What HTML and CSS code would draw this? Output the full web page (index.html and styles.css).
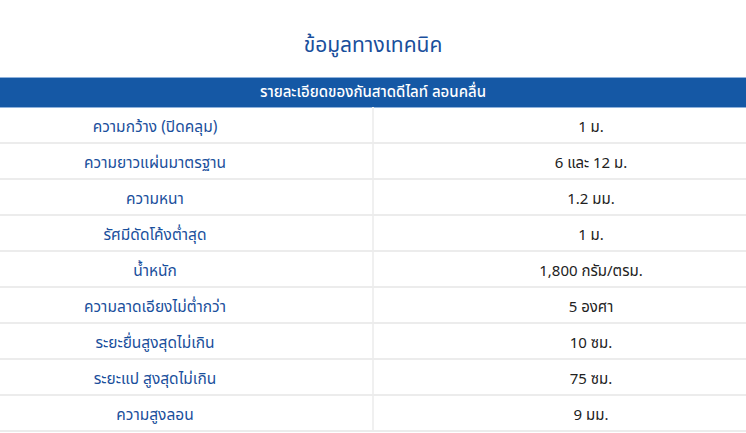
FILE: index.html
```html
<!DOCTYPE html>
<html lang="th">
<head>
<meta charset="utf-8">
<link rel="stylesheet" href="styles.css">
</head>
<body>
<div class="page">
  <h2 class="title">ข้อมูลทางเทคนิค</h2>
  <div class="table-wrap">
    <table class="spec">
      <thead>
        <tr><th colspan="2">รายละเอียดของกันสาดดีไลท์ ลอนคลื่น</th></tr>
      </thead>
      <tbody>
        <tr><td class="label">ความกว้าง (ปิดคลุม)</td><td class="value">1 ม.</td></tr>
        <tr><td class="label">ความยาวแผ่นมาตรฐาน</td><td class="value">6 และ 12 ม.</td></tr>
        <tr><td class="label">ความหนา</td><td class="value">1.2 มม.</td></tr>
        <tr><td class="label">รัศมีดัดโค้งต่ำสุด</td><td class="value">1 ม.</td></tr>
        <tr><td class="label">น้ำหนัก</td><td class="value">1,800 กรัม/ตรม.</td></tr>
        <tr><td class="label">ความลาดเอียงไม่ต่ำกว่า</td><td class="value">5 องศา</td></tr>
        <tr><td class="label">ระยะยื่นสูงสุดไม่เกิน</td><td class="value">10 ซม.</td></tr>
        <tr><td class="label">ระยะแป สูงสุดไม่เกิน</td><td class="value">75 ซม.</td></tr>
        <tr><td class="label">ความสูงลอน</td><td class="value">9 มม.</td></tr>
      </tbody>
    </table>
  </div>
</div>
</body>
</html>
```
FILE: styles.css
```css
html, body {
  margin: 0;
  padding: 0;
  background: #ffffff;
  overflow: hidden;
}
body {
  font-family: "Noto Sans", "Noto Sans Thai", "Liberation Sans", sans-serif;
}
.page {
  padding-top: 30px;
}
.title {
  margin: 0 0 19px;
  height: 28px;
  line-height: 28px;
  text-align: center;
  font-size: 21px;
  font-weight: 400;
  color: #1a4f9c;
}
.table-wrap {
  overflow: hidden;
  display: flex;
  justify-content: center;
}
.spec {
  flex: none;
  width: 870px;
  border-collapse: collapse;
  table-layout: fixed;
}
.spec th {
  background: #1558a5;
  color: #ffffff;
  font-size: 15px;
  font-weight: 500;
  height: 29px;
  padding: 0;
  border-top: 1px solid #8fb2dc;
  border-bottom: 1px solid #8fb2dc;
  text-align: center;
}
.spec td {
  height: 33px;
  padding: 1px 0 0;
  line-height: 20px;
  text-align: center;
  border-bottom: 2px solid #ececec;
}
.spec td.label {
  color: #1a4f9c;
  font-size: 15.5px;
  border-right: 2px solid #f0f0f0;
}
.spec td.value {
  color: #222222;
  font-size: 15px;
}
```
